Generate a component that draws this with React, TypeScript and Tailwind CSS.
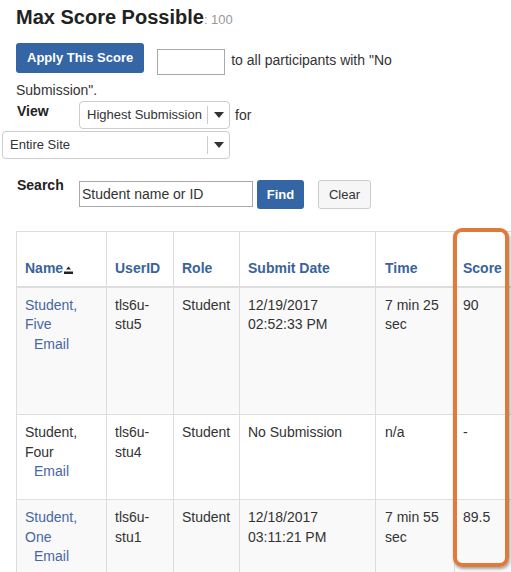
import React from "react";

// ---------------------------------------------------------------------------
// Small drawings
// ---------------------------------------------------------------------------

function SortIcon() {
  return (
    <svg width="9" height="8" viewBox="0 0 9 8" className="ml-[1px] inline-block align-[-1px]">
      <polygon points="4.5,0.5 7,3.5 2,3.5" fill="#222" />
      <rect x="0" y="5.5" width="9" height="2.5" fill="#222" />
    </svg>
  );
}

function Select({ label, width }: { label: string; width: string }) {
  return (
    <div
      className={`flex h-[28px] items-center rounded-[4px] border border-[#cccccc] bg-white text-[13px] text-[#333] ${width}`}
    >
      <span className="flex-1 truncate pl-[7px]">{label}</span>
      <span className="h-[18px] w-px bg-[#cccccc]" />
      <span className="flex w-[21px] items-center justify-center">
        <svg width="10" height="6" viewBox="0 0 10 6">
          <polygon points="0,0 10,0 5,6" fill="#333" />
        </svg>
      </span>
    </div>
  );
}

// ---------------------------------------------------------------------------
// Data
// ---------------------------------------------------------------------------

const rows = [
  {
    first: "Student,",
    last: "Five",
    link: true,
    user: "tls6u-stu5",
    role: "Student",
    date: "12/19/2017 02:52:33 PM",
    time: "7 min 25 sec",
    score: "90",
    height: "h-[128px]",
    bg: "bg-[#f9f9f9]",
  },
  {
    first: "Student,",
    last: "Four",
    link: false,
    user: "tls6u-stu4",
    role: "Student",
    date: "No Submission",
    time: "n/a",
    score: "-",
    height: "h-[85px]",
    bg: "bg-white",
  },
  {
    first: "Student,",
    last: "One",
    link: true,
    user: "tls6u-stu1",
    role: "Student",
    date: "12/18/2017 03:11:21 PM",
    time: "7 min 55 sec",
    score: "89.5",
    height: "h-[84px]",
    bg: "bg-[#f9f9f9]",
  },
];

const th = "h-[55px] border border-b-2 border-[#dddddd] px-2 pb-[8px] text-left align-bottom text-[14px] font-bold leading-[20px] text-[#3a6399]";
const td = "border border-[#dddddd] px-2 pt-[8px] align-top text-[14px] leading-[19.5px] text-[#333]";

// ---------------------------------------------------------------------------
// Page
// ---------------------------------------------------------------------------

export default function App() {
  return (
    <div
      className="relative h-[572px] w-[511px] overflow-hidden bg-white text-[#333]"
      style={{ fontFamily: '"Liberation Sans", Arial, sans-serif' }}
    >
      {/* Title */}
      <h2 className="pl-4 pt-[5px] text-[20px] font-bold leading-[24px] text-[#222]">
        Max Score Possible<span className="text-[13px] font-normal text-[#999]">: 100</span>
      </h2>

      {/* Apply score */}
      <p className="mt-[11px] w-[430px] pl-4 text-[14px] leading-[20px]">
        <button className="mb-[7px] mr-[13px] inline-block h-[30px] rounded-[3px] bg-[#3465a4] px-[11px] align-middle text-[13px] font-bold text-white">
          Apply This Score
        </button>
        <input className="mr-[6px] inline-block h-[26px] w-[68px] border border-[#a9a9a9] align-middle" />
        to all participants with "No Submission".
      </p>

      {/* View */}
      <div className="mt-[1px] flex items-start pl-[17px] text-[14px]">
        <span className="w-[62px] pt-[1px] font-bold leading-[18px] text-[#222]">View</span>
        <Select label="Highest Submission" width="w-[151px]" />
        <span className="ml-[5px] pt-[4px] leading-[20px]">for</span>
      </div>
      <div className="ml-[2px] mt-[2px]">
        <Select label="Entire Site" width="w-[228px]" />
      </div>

      {/* Search */}
      <div className="mt-[21px] flex items-start pl-[17px] text-[14px]">
        <span className="-mt-[3px] w-[62px] font-bold leading-[16px] text-[#222]">Search</span>
        <input
          className="mt-[1px] h-[26px] w-[174px] border border-[#a9a9a9] px-[2px] text-[14px] text-[#333]"
          defaultValue="Student name or ID"
        />
        <button className="ml-[4px] h-[29px] w-[47px] rounded-[3px] bg-[#3465a4] text-[13px] font-bold text-white">
          Find
        </button>
        <button className="ml-[14px] h-[29px] w-[53px] rounded-[3px] border border-[#cccccc] bg-[#f6f6f6] text-[13px] text-[#333]">
          Clear
        </button>
      </div>

      {/* Results table */}
      <table className="ml-4 mt-[22px] w-[495px] table-fixed border-collapse">
        <colgroup>
          <col className="w-[90px]" />
          <col className="w-[67px]" />
          <col className="w-[66px]" />
          <col className="w-[136px]" />
          <col className="w-[79px]" />
          <col className="w-[57px]" />
        </colgroup>
        <thead>
          <tr>
            <th className={th}>
              Name
              <SortIcon />
            </th>
            <th className={th}>UserID</th>
            <th className={th}>Role</th>
            <th className={th}>Submit Date</th>
            <th className={`${th} pl-[9px]`}>Time</th>
            <th className={th}>Score</th>
          </tr>
        </thead>
        <tbody>
          {rows.map((r) => (
            <tr key={r.user} className={`${r.height} ${r.bg}`}>
              <td className={td}>
                <span className={r.link ? "text-[#47679f]" : ""}>
                  {r.first}
                  <br />
                  {r.last}
                </span>
                <span className="block pl-[9px] text-[#47679f]">Email</span>
              </td>
              <td className={td}>{r.user}</td>
              <td className={td}>{r.role}</td>
              <td className={td}>{r.date}</td>
              <td className={`${td} pl-[9px]`}>{r.time}</td>
              <td className={td}>{r.score}</td>
            </tr>
          ))}
        </tbody>
      </table>

      {/* Highlight annotation over the Score column */}
      <div className="absolute left-[453px] top-[228px] h-[339px] w-[56px] rounded-[9px] border-[4px] border-[#e07a3b] shadow-[1px_2px_3px_rgba(0,0,0,0.35)]" />
    </div>
  );
}
